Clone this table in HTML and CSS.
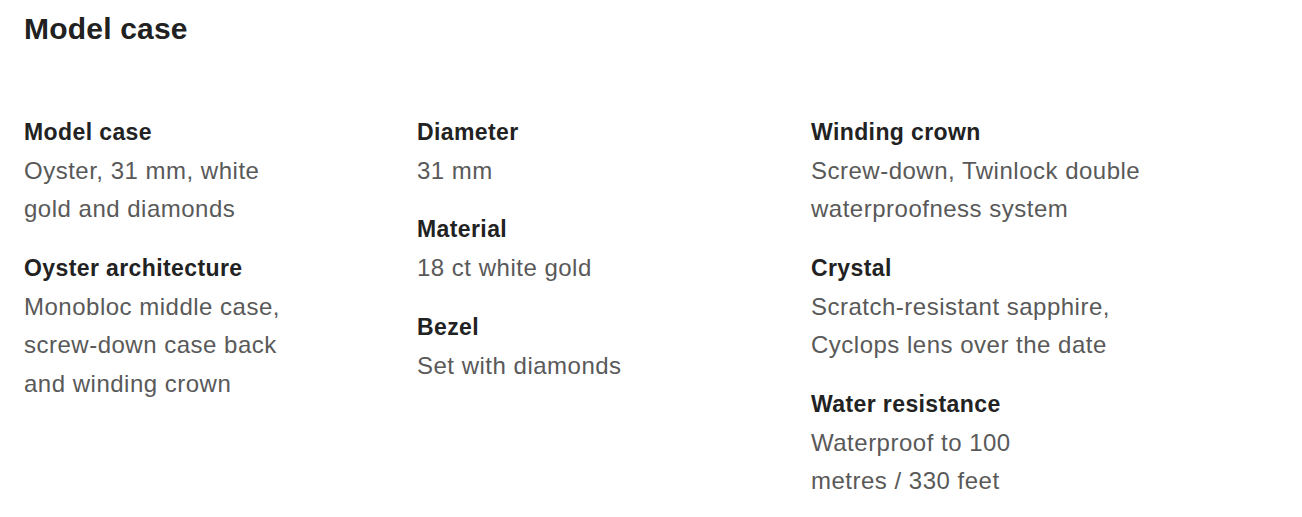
FILE: index.html
```html
<!DOCTYPE html>
<html>
<head>
<meta charset="utf-8">
<link rel="stylesheet" href="styles.css">
</head>
<body>
<section class="specs">
  <h2 class="title">Model case</h2>
  <div class="grid">
    <div class="col">
      <div class="item">
        <div class="label">Model case</div>
        <div class="value">Oyster, 31 mm, white<br>gold and diamonds</div>
      </div>
      <div class="item">
        <div class="label">Oyster architecture</div>
        <div class="value">Monobloc middle case,<br>screw-down case back<br>and winding crown</div>
      </div>
    </div>
    <div class="col">
      <div class="item">
        <div class="label">Diameter</div>
        <div class="value">31 mm</div>
      </div>
      <div class="item">
        <div class="label">Material</div>
        <div class="value">18 ct white gold</div>
      </div>
      <div class="item">
        <div class="label">Bezel</div>
        <div class="value">Set with diamonds</div>
      </div>
    </div>
    <div class="col">
      <div class="item">
        <div class="label">Winding crown</div>
        <div class="value">Screw-down, Twinlock double<br>waterproofness system</div>
      </div>
      <div class="item">
        <div class="label">Crystal</div>
        <div class="value">Scratch-resistant sapphire,<br>Cyclops lens over the date</div>
      </div>
      <div class="item">
        <div class="label">Water resistance</div>
        <div class="value">Waterproof to 100<br>metres / 330 feet</div>
      </div>
    </div>
  </div>
</section>
</body>
</html>
```

FILE: styles.css
```css
html, body {
  margin: 0;
  padding: 0;
  background: #ffffff;
}

body {
  font-family: "Liberation Sans", Arial, Helvetica, sans-serif;
  color: #212121;
}

.specs {
  padding: 11px 0 0 24px;
}

.title {
  margin: 0;
  font-size: 30px;
  line-height: 36px;
  font-weight: 700;
  color: #212121;
  letter-spacing: 0.2px;
}

.grid {
  margin-top: 65.5px;
  display: grid;
  grid-template-columns: 393px 394px auto;
}

.col {
  display: flex;
  flex-direction: column;
  gap: 20px;
}

.label {
  font-size: 23px;
  line-height: 39px;
  font-weight: 700;
  color: #222222;
  white-space: nowrap;
  letter-spacing: 0.4px;
}

.value {
  font-size: 24px;
  line-height: 38.5px;
  font-weight: 400;
  color: #595959;
  white-space: nowrap;
  letter-spacing: 0.5px;
}
```
